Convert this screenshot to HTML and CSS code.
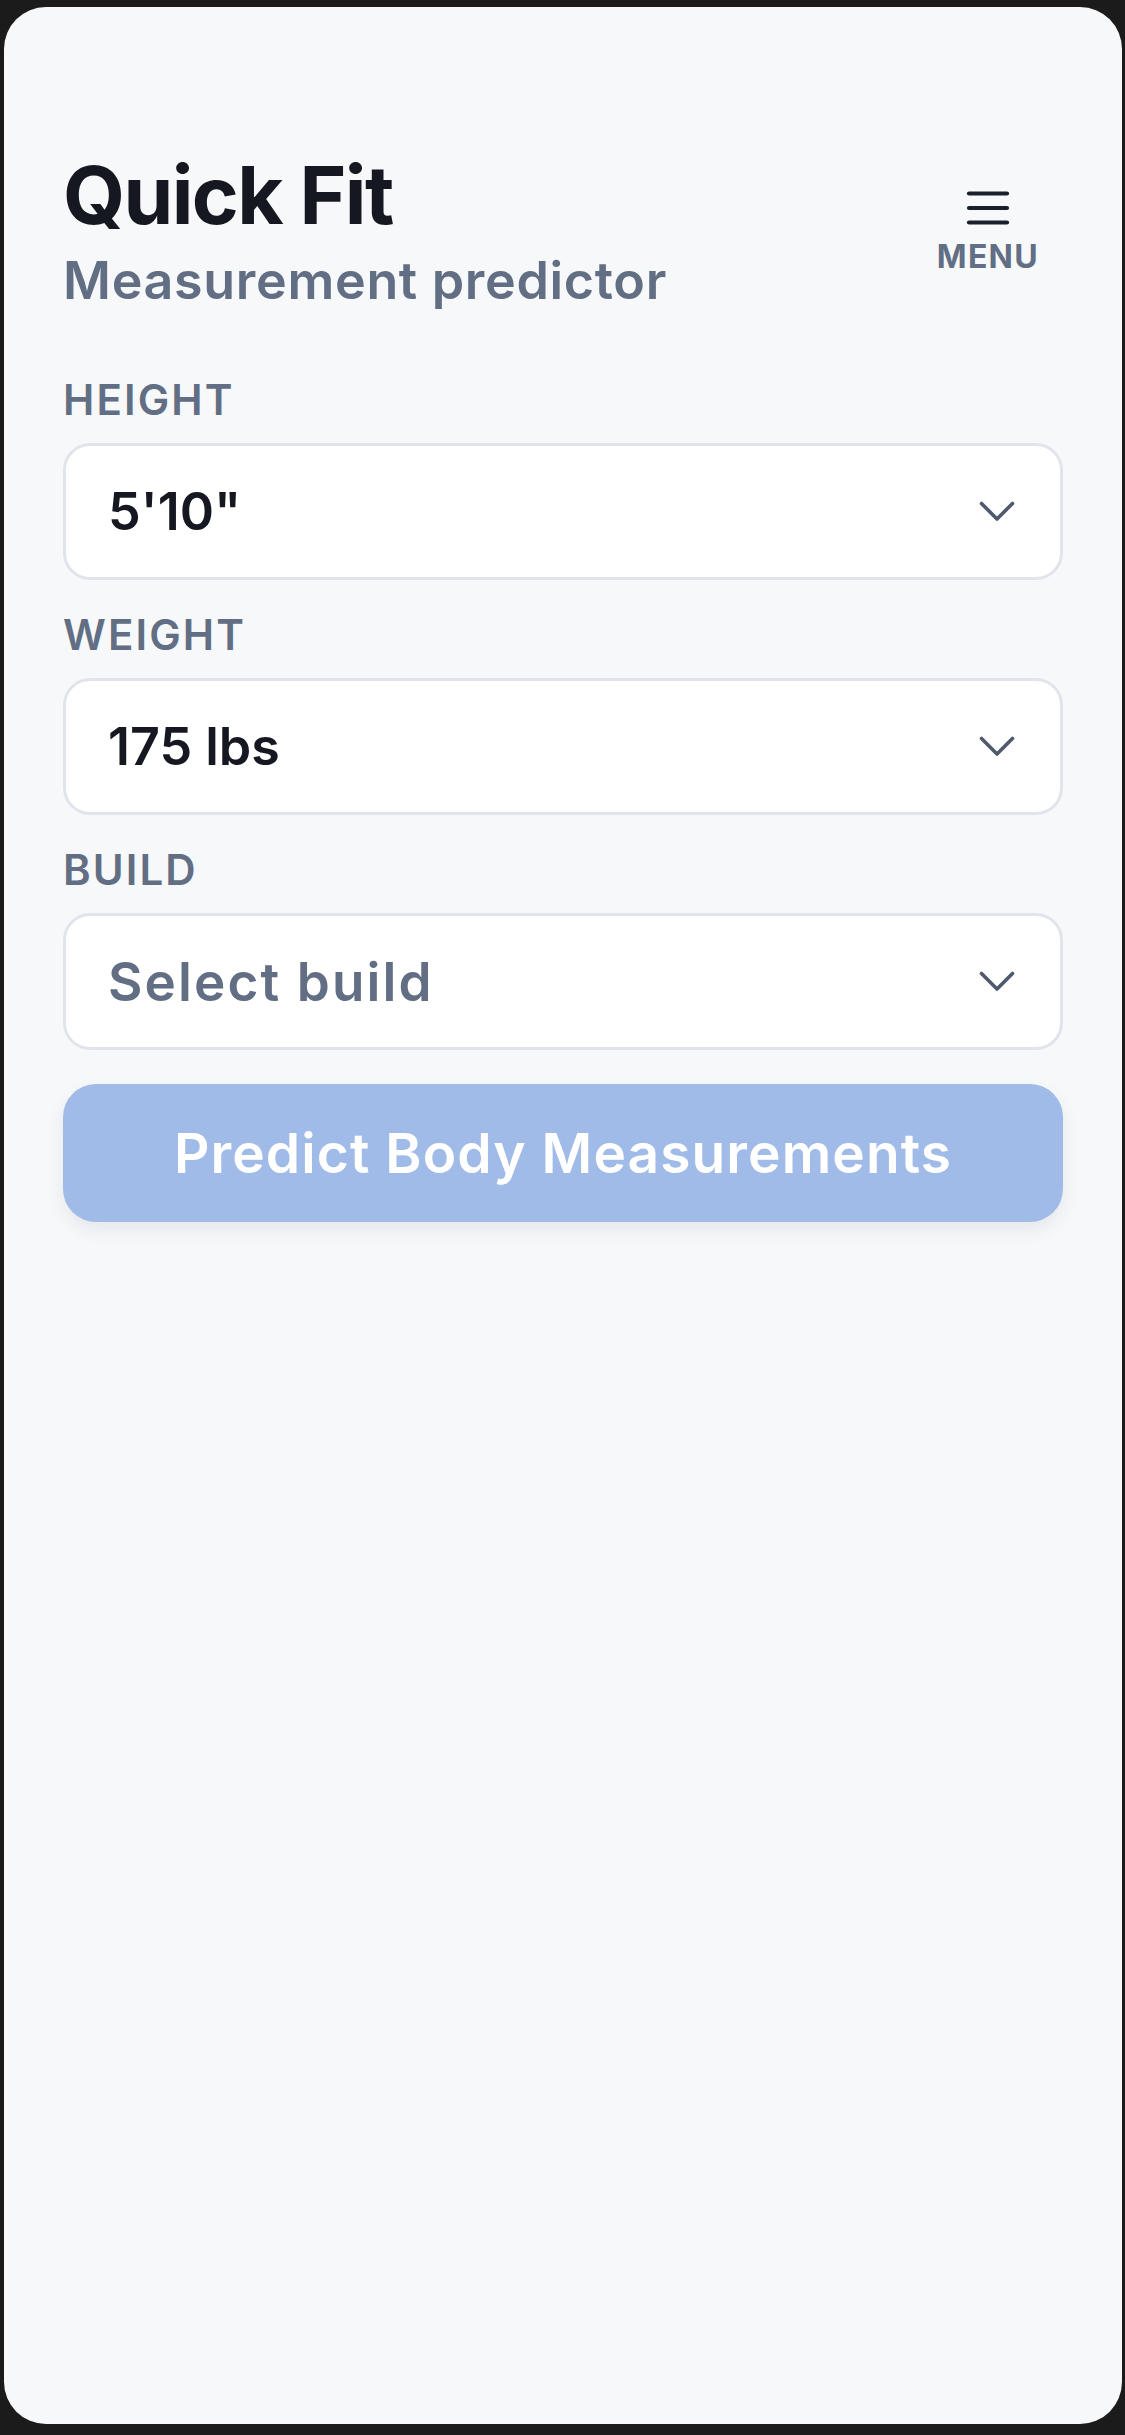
FILE: index.html
```html
<!DOCTYPE html>
<html lang="en">
<head>
<meta charset="utf-8">
<title>Quick Fit</title>
<link rel="stylesheet" href="styles.css">
</head>
<body>
<div class="screen">
  <header class="header">
    <div class="titles">
      <h1 class="title">Quick Fit</h1>
      <p class="subtitle">Measurement predictor</p>
    </div>
    <button class="menu" type="button">
      <svg class="menu-icon" width="44" height="34" viewBox="0 0 44 34" aria-hidden="true">
        <line x1="3" y1="2.5" x2="41" y2="2.5"/>
        <line x1="3" y1="17" x2="41" y2="17"/>
        <line x1="3" y1="31.5" x2="41" y2="31.5"/>
      </svg>
      <span class="menu-label">MENU</span>
    </button>
  </header>

  <form class="form">
    <div class="field">
      <label class="label">HEIGHT</label>
      <div class="select">
        <span class="value">5'10"</span>
        <svg class="chevron" width="36" height="21" viewBox="0 0 36 21" aria-hidden="true"><polyline points="2.5,2.5 18,18 33.5,2.5"/></svg>
      </div>
    </div>
    <div class="field">
      <label class="label">WEIGHT</label>
      <div class="select">
        <span class="value">175 lbs</span>
        <svg class="chevron" width="36" height="21" viewBox="0 0 36 21" aria-hidden="true"><polyline points="2.5,2.5 18,18 33.5,2.5"/></svg>
      </div>
    </div>
    <div class="field">
      <label class="label">BUILD</label>
      <div class="select">
        <span class="value placeholder">Select build</span>
        <svg class="chevron" width="36" height="21" viewBox="0 0 36 21" aria-hidden="true"><polyline points="2.5,2.5 18,18 33.5,2.5"/></svg>
      </div>
    </div>
    <button class="predict" type="button">Predict Body Measurements</button>
  </form>
</div>
</body>
</html>
```

FILE: styles.css
```css
* { box-sizing: border-box; }

html, body {
  margin: 0;
  padding: 0;
  background: #1b1b1b;
}

body {
  font-family: Inter, "Noto Sans", "Liberation Sans", sans-serif;
  padding: 7px 3px 11px 4px;
}

.screen {
  min-height: 2417px;
  background: #f7f8fa;
  border-radius: 42px;
  padding: 144px 59px 0 59px;
}

.header {
  display: flex;
  justify-content: space-between;
  align-items: flex-start;
}

.title {
  margin: 0;
  font-size: 80px;
  line-height: 88px;
  font-weight: 700;
  letter-spacing: -0.02em;
  color: #151821;
}

.subtitle {
  margin: 12px 0 0 0;
  font-size: 52px;
  line-height: 60px;
  font-weight: 600;
  letter-spacing: 0.013em;
  color: #626e83;
}

.menu {
  margin: 40px 24px 0 0;
  padding: 0;
  border: 0;
  background: none;
  display: flex;
  flex-direction: column;
  align-items: center;
  gap: 16px;
  font-family: inherit;
}

.menu-icon line {
  stroke: #1b1f2a;
  stroke-width: 4.2;
  stroke-linecap: round;
}

.menu-label {
  font-size: 32px;
  line-height: 32px;
  font-weight: 700;
  letter-spacing: 0.04em;
  color: #626e83;
}

.form {
  margin-top: 68px;
  display: flex;
  flex-direction: column;
  gap: 34px;
}

.field {
  display: flex;
  flex-direction: column;
  gap: 22px;
}

.label {
  font-size: 42px;
  line-height: 42px;
  font-weight: 600;
  letter-spacing: 0.05em;
  color: #626e83;
}

.select {
  height: 137px;
  background: #ffffff;
  border: 3px solid #e1e5eb;
  border-radius: 27px;
  display: flex;
  align-items: center;
  justify-content: space-between;
  padding: 0 45px 0 42px;
}

.value {
  font-size: 52px;
  font-weight: 600;
  color: #151821;
}

.value.placeholder {
  font-size: 53px;
  letter-spacing: 0.04em;
  color: #626e83;
}

.chevron polyline {
  fill: none;
  stroke: #4f5a6c;
  stroke-width: 3.6;
  stroke-linecap: round;
  stroke-linejoin: round;
}

.predict {
  height: 138px;
  border: 0;
  border-radius: 33px;
  background: #a0bbe8;
  color: #ffffff;
  font-family: inherit;
  font-size: 55px;
  font-weight: 600;
  letter-spacing: 0.02em;
  box-shadow: 0 8px 18px rgba(30, 40, 60, 0.08);
}
```
